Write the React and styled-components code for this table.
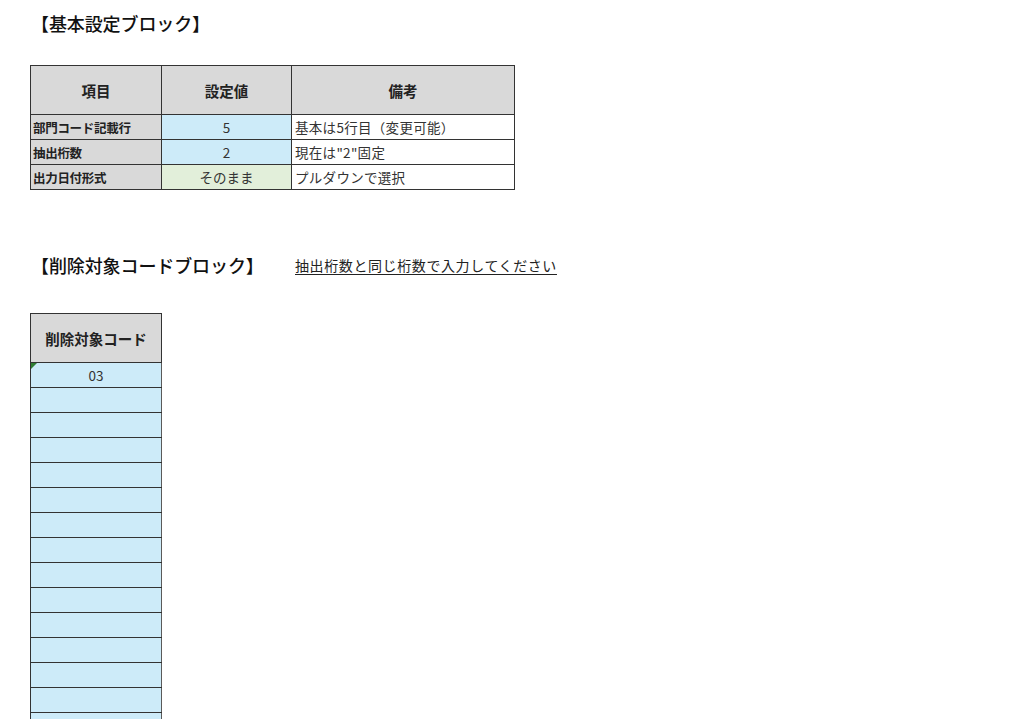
import React from 'react';
import styled, { createGlobalStyle } from 'styled-components';

const GlobalStyle = createGlobalStyle`
  body {
    margin: 0;
    background: #ffffff;
    font-family: "Noto Sans CJK JP", "Noto Sans", sans-serif;
    color: #222;
  }
`;

const Sheet = styled.div`
  padding: 12px 0 0 30px;
  height: 719px;
  overflow: hidden;
  box-sizing: border-box;
`;

const TitleRow = styled.div`
  display: grid;
  grid-template-columns: 261px auto;
  align-items: center;
  height: 22px;
  margin-top: ${(p) => p.top || 0}px;
`;

const Title = styled.h2`
  margin: 0;
  padding-left: 1px;
  font-size: 18px;
  font-weight: 500;
  line-height: 22px;
  letter-spacing: -0.1px;
  color: #111;
  white-space: nowrap;
`;

const Note = styled.span`
  padding-left: 4px;
  font-size: 14px;
  line-height: 18px;
  letter-spacing: 0.6px;
  text-decoration: underline;
  text-underline-offset: 3px;
  color: #222;
  white-space: nowrap;
`;

const Grid = styled.table`
  border-collapse: collapse;
  table-layout: fixed;
  margin-top: ${(p) => p.top || 0}px;
`;

const HeadCell = styled.th`
  width: ${(p) => p.w}px;
  height: 49px;
  padding: 0;
  background: #d9d9d9;
  border: 1px solid #333;
  font-size: 14.5px;
  font-weight: 700;
  color: #222;
  text-align: center;
  vertical-align: middle;
  box-sizing: border-box;
`;

const LabelCell = styled.td`
  height: 24px;
  padding: 0 0 0 2px;
  background: #d9d9d9;
  border: 1px solid #333;
  font-size: 12.5px;
  font-weight: 700;
  color: #222;
  white-space: nowrap;
  letter-spacing: -0.3px;
`;

const ValueCell = styled.td`
  position: relative;
  height: 24px;
  padding: 0;
  background: ${(p) => (p.tone === 'green' ? '#e2efda' : '#cdebf9')};
  border: 1px solid #333;
  border-right-color: ${(p) => (p.edge ? '#5a5a5a' : '#333')};
  font-size: 13.5px;
  color: #333;
  text-align: center;
  white-space: nowrap;
`;

const NoteCell = styled.td`
  height: 24px;
  padding: 0 0 0 3px;
  background: #fff;
  border: 1px solid #333;
  font-size: 13.5px;
  color: #333;
  white-space: nowrap;
  letter-spacing: 0.3px;
`;

const ErrorMark = styled.span`
  position: absolute;
  left: 0;
  top: 0;
  width: 0;
  height: 0;
  border-top: 6px solid #2e7d32;
  border-right: 6px solid transparent;
`;

const settings = [
  { label: '部門コード記載行', value: '5', note: '基本は5行目（変更可能）' },
  { label: '抽出桁数', value: '2', note: '現在は"2"固定' },
  { label: '出力日付形式', value: 'そのまま', note: 'プルダウンで選択', tone: 'green' },
];

const codes = ['03', '', '', '', '', '', '', '', '', '', '', '', '', '', '', ''];

export default function App() {
  return (
    <>
      <GlobalStyle />
      <Sheet>
        <TitleRow>
          <Title>【基本設定ブロック】</Title>
        </TitleRow>
        <Grid top={31}>
          <thead>
            <tr>
              <HeadCell w={131}>項目</HeadCell>
              <HeadCell w={130}>設定値</HeadCell>
              <HeadCell w={223}>備考</HeadCell>
            </tr>
          </thead>
          <tbody>
            {settings.map((s) => (
              <tr key={s.label}>
                <LabelCell>{s.label}</LabelCell>
                <ValueCell tone={s.tone}>{s.value}</ValueCell>
                <NoteCell>{s.note}</NoteCell>
              </tr>
            ))}
          </tbody>
        </Grid>

        <TitleRow top={64}>
          <Title>【削除対象コードブロック】</Title>
          <Note>抽出桁数と同じ桁数で入力してください</Note>
        </TitleRow>
        <Grid top={37}>
          <thead>
            <tr>
              <HeadCell w={131}>削除対象コード</HeadCell>
            </tr>
          </thead>
          <tbody>
            {codes.map((c, i) => (
              <tr key={i}>
                <ValueCell edge>
                  {i === 0 && <ErrorMark />}
                  {c}
                </ValueCell>
              </tr>
            ))}
          </tbody>
        </Grid>
      </Sheet>
    </>
  );
}
